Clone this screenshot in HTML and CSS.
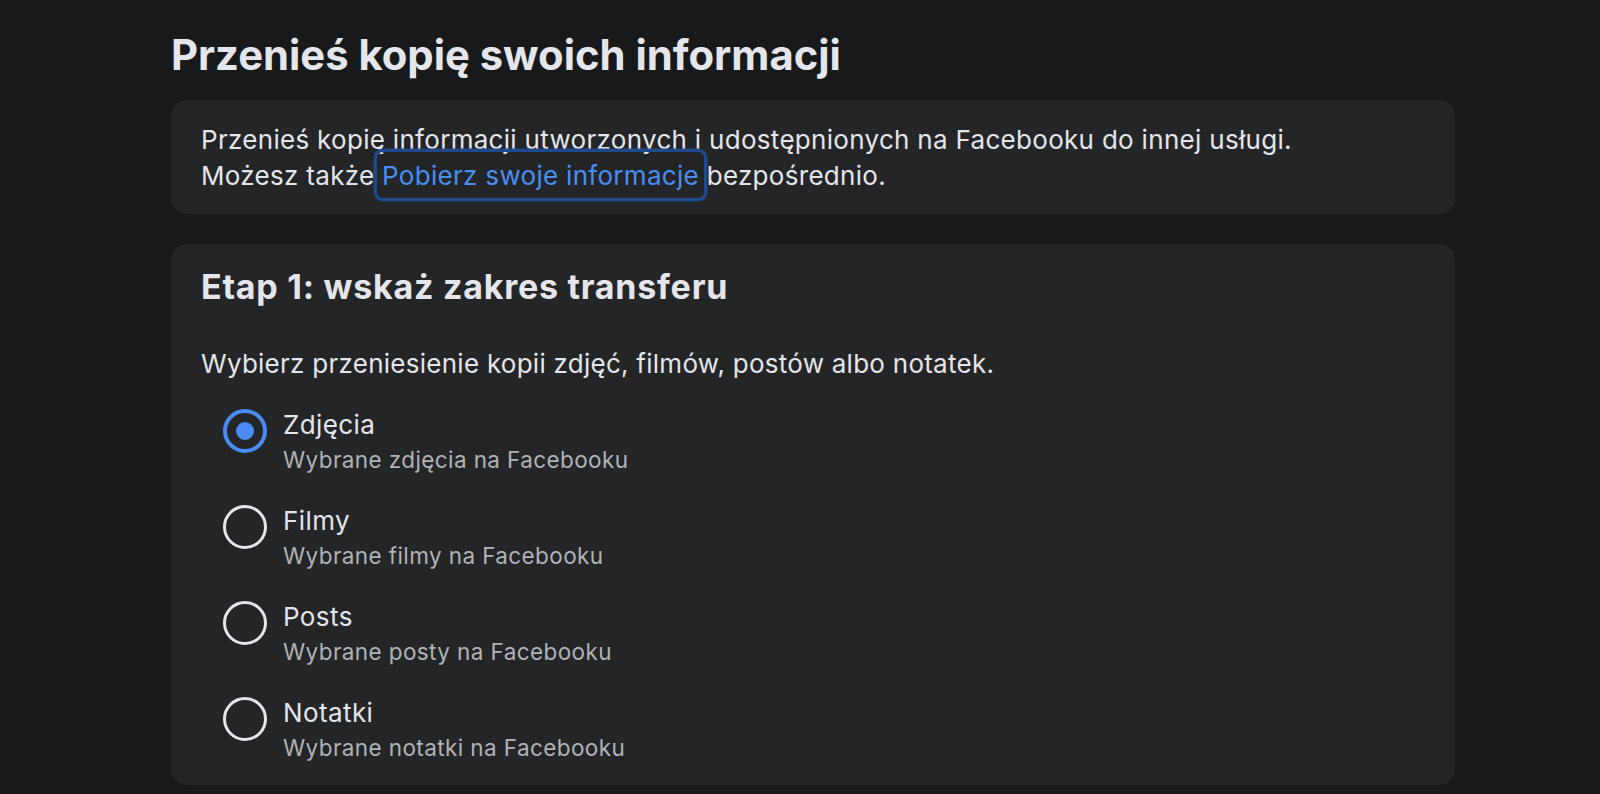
FILE: index.html
```html
<!DOCTYPE html>
<html lang="pl">
<head>
<meta charset="utf-8">
<title>Przenieś kopię swoich informacji</title>
<link rel="stylesheet" href="styles.css">
</head>
<body>
<main class="page">
  <h1 class="page-title">Przenieś kopię swoich informacji</h1>
  <section class="card intro">
    <p class="intro-text">Przenieś kopię informacji utworzonych i udostępnionych na Facebooku do innej usługi.<br>Możesz także <a class="link" href="#">Pobierz swoje informacje</a> bezpośrednio.</p>
  </section>
  <section class="card step">
    <h2 class="step-title">Etap 1: wskaż zakres transferu</h2>
    <p class="step-desc">Wybierz przeniesienie kopii zdjęć, filmów, postów albo notatek.</p>
    <ul class="options">
      <li class="option">
        <span class="radio checked"><span class="dot"></span></span>
        <div class="option-text">
          <div class="option-label">Zdjęcia</div>
          <div class="option-sub">Wybrane zdjęcia na Facebooku</div>
        </div>
      </li>
      <li class="option">
        <span class="radio"></span>
        <div class="option-text">
          <div class="option-label">Filmy</div>
          <div class="option-sub">Wybrane filmy na Facebooku</div>
        </div>
      </li>
      <li class="option">
        <span class="radio"></span>
        <div class="option-text">
          <div class="option-label">Posts</div>
          <div class="option-sub">Wybrane posty na Facebooku</div>
        </div>
      </li>
      <li class="option">
        <span class="radio"></span>
        <div class="option-text">
          <div class="option-label">Notatki</div>
          <div class="option-sub">Wybrane notatki na Facebooku</div>
        </div>
      </li>
    </ul>
  </section>
</main>
</body>
</html>
```
FILE: styles.css
```css
html, body {
  margin: 0;
  padding: 0;
  background: #18191a;
}
body {
  font-family: Inter, "Noto Sans", "Liberation Sans", sans-serif;
  color: #e4e6eb;
  height: 794px;
  overflow: hidden;
}
.page {
  width: 1284px;
  margin-left: 171px;
  padding-top: 30px;
}
.page-title {
  margin: 0 0 20px 0;
  font-size: 41.75px;
  line-height: 50px;
  font-weight: 700;
  color: #e4e6eb;
}
.card {
  background: #242526;
  border-radius: 15px;
}
.intro {
  padding: 22px 30px 20px 30px;
  margin-bottom: 30px;
}
.intro-text {
  margin: 0;
  font-size: 26px;
  line-height: 36px;
  letter-spacing: 0.3px;
}
.link {
  color: #4a8ef5;
  text-decoration: none;
  padding: 8px 5px 7px 5px;
  margin: 0 -5px;
  border-radius: 6px;
  box-shadow: 0 0 0 3.5px #1e4a8d;
}
.step {
  padding: 24px 30px 23px 30px;
}
.step-title {
  margin: 0;
  font-size: 34px;
  line-height: 38px;
  font-weight: 700;
  letter-spacing: 0.75px;
}
.step-desc {
  margin: 40px 0 0 0;
  font-size: 26px;
  line-height: 36px;
  letter-spacing: 0.26px;
}
.options {
  list-style: none;
  margin: 27px 0 0 0;
  padding: 0 0 0 22px;
  display: flex;
  flex-direction: column;
  gap: 31px;
}
.option {
  display: flex;
  align-items: flex-start;
  gap: 16px;
}
.radio {
  box-sizing: border-box;
  width: 44px;
  height: 44px;
  flex: none;
  border-radius: 50%;
  border: 3.5px solid #e4e6eb;
  display: flex;
  align-items: center;
  justify-content: center;
}
.radio.checked {
  border: 4px solid #4a8cf5;
}
.dot {
  width: 18px;
  height: 18px;
  border-radius: 50%;
  background: #4a8cf5;
}
.option-label {
  font-size: 26px;
  line-height: 32px;
  letter-spacing: 0.4px;
  color: #e4e6eb;
}
.option-sub {
  margin-top: 5px;
  font-size: 22.5px;
  line-height: 28px;
  letter-spacing: 0.4px;
  color: #b0b3b8;
}
```
